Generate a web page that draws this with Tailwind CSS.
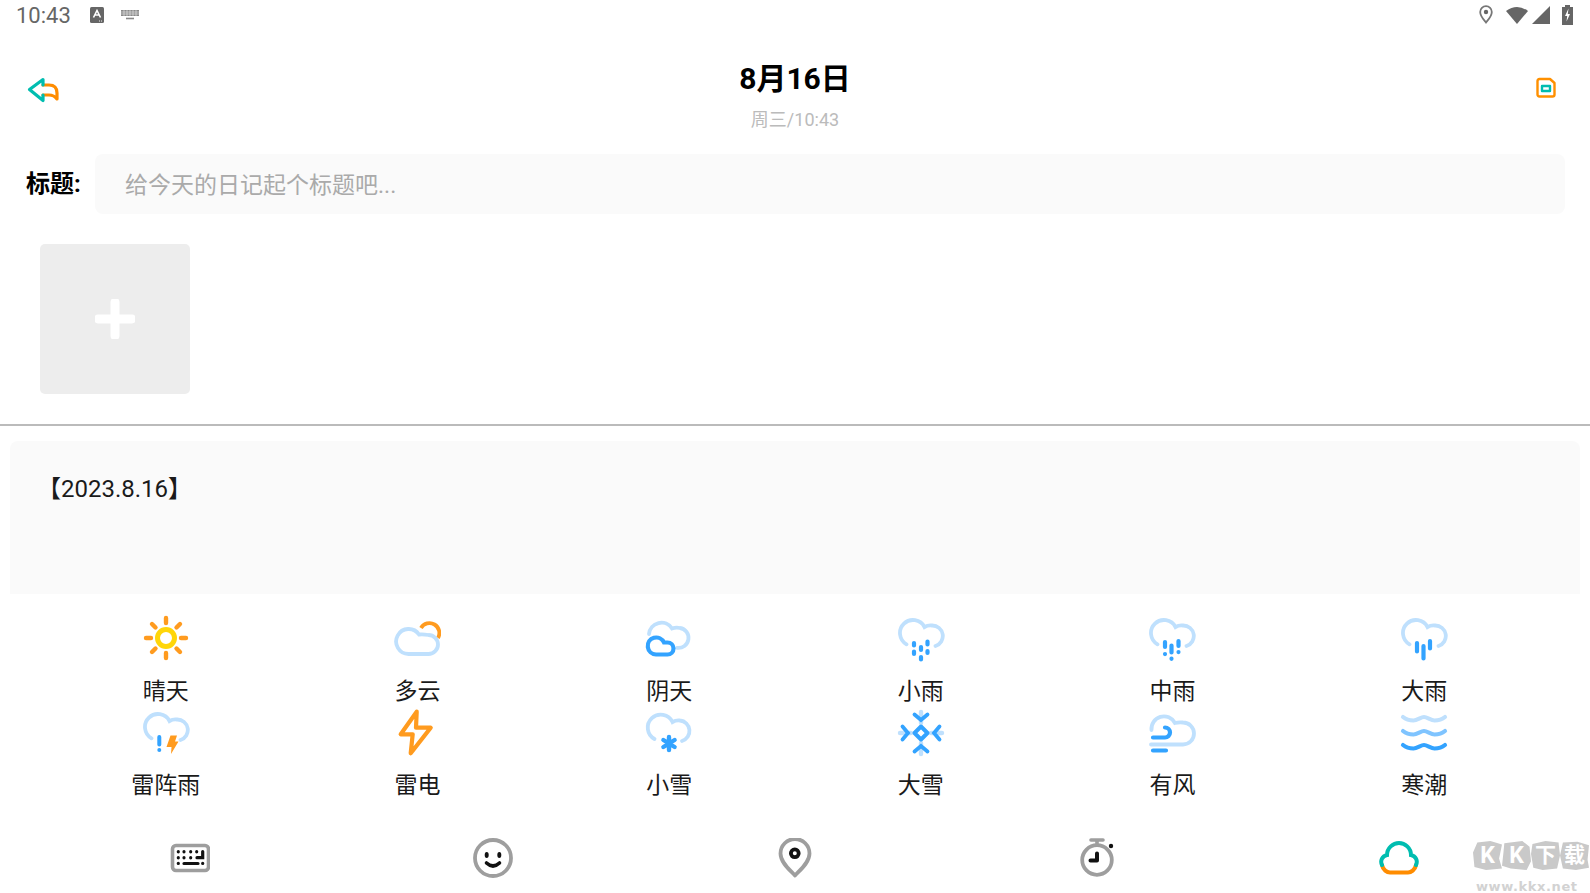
<!DOCTYPE html>
<html lang="zh-CN">
<head>
    <meta charset="UTF-8">
    <meta name="viewport" content="width=device-width, initial-scale=1.0">
    <title>写日记</title>
    <script src="https://cdn.jsdelivr.net/npm/@tailwindcss/browser@4"></script>
</head>
<body class="relative w-[1590px] h-[893px] overflow-hidden bg-white text-black font-['Roboto','Noto_Sans_CJK_SC',sans-serif]">

    <!-- shared cloud outline -->
    <svg class="absolute w-0 h-0" aria-hidden="true">
        <defs>
            <path id="cloud" d="M9.5 30.3A13 13 0 1 1 27.5 13Q31 11 35 11.5A10.5 10.5 0 0 1 38.5 32" fill="none" stroke="#bfe0fd" stroke-width="3.8" stroke-linecap="round"/>
        </defs>
    </svg>

    <!-- status bar -->
    <div class="h-[29px] flex items-center justify-between pl-[16px] pr-[17px]">
        <div class="flex items-center">
            <span class="text-[22px] leading-[29px] text-[#666] w-[54px] pt-[1px]">10:43</span>
            <svg class="ml-[20px]" width="14" height="16" viewBox="0 0 14 16">
                <rect width="14" height="16" rx="1.5" fill="#666"/>
                <path d="M3.5 10.5 7 3.5l3.5 7M5 8h4" fill="none" stroke="#fff" stroke-width="1.6"/>
                <path d="M9 14h.9M11 14h.9" stroke="#fff" stroke-width="1"/>
            </svg>
            <svg class="ml-[17px] mt-[1px]" width="18" height="10" viewBox="0 0 18 10">
                <path d="M0 0h18v6H0z" fill="#888"/>
                <path d="M0 2h18M0 4h18M3 0v6M6 0v6M9 0v6M12 0v6M15 0v6" stroke="#fff" stroke-width=".5"/>
                <path d="M5 8.5h8" stroke="#888" stroke-width="1.6"/>
            </svg>
        </div>
        <div class="flex items-center">
            <svg width="14" height="19" viewBox="0 0 14 19">
                <path d="M7 17.5C5.5 15.5 1.2 11.5 1.2 7A5.8 5.8 0 0 1 12.8 7C12.8 11.5 8.5 15.5 7 17.5Z" fill="none" stroke="#777" stroke-width="1.8"/>
                <circle cx="7" cy="7" r="2.2" fill="#666"/>
            </svg>
            <svg class="ml-[13px]" width="22" height="18" viewBox="0 0 22 18">
                <path d="M0 5Q11-3 22 5L11 18Z" fill="#666"/>
            </svg>
            <svg class="ml-[4px]" width="18" height="18" viewBox="0 0 18 18">
                <path d="M18 0V18H0Z" fill="#666"/>
            </svg>
            <svg class="ml-[12px]" width="11" height="20" viewBox="0 0 11 20">
                <path d="M3 0h5v2h3v18H0V2h3Z" fill="#666"/>
                <path d="M6.5 3.5 3 11h2.2L4.5 16.5 8 9H5.8Z" fill="#fff"/>
            </svg>
        </div>
    </div>

    <!-- header -->
    <div class="grid grid-cols-[1fr_auto_1fr] px-[26px]">
        <div class="pt-[47px]">
            <svg width="34" height="28" viewBox="0 0 34 28" fill="none" stroke-width="3.2" stroke-linejoin="round" stroke-linecap="round">
                <path d="M17 9H23Q31 9 31 17V23Q28 19 23 19H17" stroke="#ff8c00"/>
                <path d="M17 9V3.5L3.5 13.5L17 24.5V19" stroke="#00bdb0"/>
            </svg>
        </div>
        <div class="text-center">
            <h1 class="mt-[30px] h-[40px] text-[30px] leading-[40px] font-bold">8月16日</h1>
            <p class="mt-[9px] h-[24px] text-[18px] leading-[24px] text-[#bbbbbb]">周三/10:43</p>
        </div>
        <div class="pt-[48px] pr-[8px] flex justify-end">
            <svg width="20" height="21" viewBox="0 0 20 21" fill="none" stroke-width="2.4" stroke-linejoin="round">
                <path d="M3.5 2H14L18.5 6V17.5Q18.5 19.5 16.5 19.5H3.5Q1.5 19.5 1.5 17.5V4Q1.5 2 3.5 2Z" stroke="#ff9000"/>
                <rect x="6" y="9" width="8" height="5" stroke="#00bdb0"/>
            </svg>
        </div>
    </div>

    <!-- title row -->
    <div class="mt-[22px] flex items-center pl-[26px] pr-[25px]">
        <span class="w-[69px] shrink-0 h-[60px] pt-[3px] text-[24px] font-bold leading-[54px]">标题:</span>
        <div class="flex-1 h-[60px] rounded-lg bg-[#fafafa] pl-[30px] pt-[3px] text-[23px] leading-[58px] text-[#aaaaaa]">给今天的日记起个标题吧...</div>
    </div>

    <!-- add picture -->
    <div class="mt-[30px] ml-[40px] w-[150px] h-[150px] rounded-[5px] bg-[#ededed] flex items-center justify-center">
        <svg width="40" height="40" viewBox="0 0 40 40">
            <path d="M20 3V37M3 20H37" stroke="#fff" stroke-width="9" stroke-linecap="round"/>
        </svg>
    </div>

    <div class="mt-[30px] h-[2px] bg-[#bbbbbb]"></div>

    <!-- diary text -->
    <div class="mt-[15px] mx-[10px] h-[153px] rounded-t-lg bg-[#fafafa] pl-[27px] pt-[33px] text-[24px] leading-[30px] text-[#1a1a1a]">【2023.8.16】</div>

    <!-- weather -->
    <div class="mt-[20px] mx-[40px] grid grid-cols-6 gap-y-[2px] text-[23px] leading-[30px] text-[#1a1a1a] text-center">
        <div class="flex flex-col items-center">
            <svg width="48" height="48" viewBox="0 0 48 48" fill="none">
                <g stroke="#ff9b1f" stroke-width="4.4" stroke-linecap="round">
                    <path d="M24 4V9M24 39V44M4 24H9M39 24H44M10 10 13.5 13.5M38 10 34.5 13.5M10 38 13.5 34.5M38 38 34.5 34.5"/>
                </g>
                <circle cx="24" cy="24" r="8.5" stroke="#ffd60a" stroke-width="5"/>
            </svg>
            <span class="mt-[15px]">晴天</span>
        </div>
        <div class="flex flex-col items-center">
            <svg width="48" height="48" viewBox="0 0 48 48" fill="none" stroke-width="3.8">
                <path d="M28 14A9.5 9.5 0 0 1 45 24" stroke="#ff9b1f"/>
                <path d="M15.5 40H35.5A9.5 9.5 0 0 0 35.5 21Q30 20 26 20.5A12.5 12.5 0 1 0 15.5 40Z" stroke="#bfe0fd"/>
            </svg>
            <span class="mt-[15px]">多云</span>
        </div>
        <div class="flex flex-col items-center">
            <svg width="48" height="48" viewBox="0 0 48 48" fill="none">
                <path d="M4 20A12.5 12.5 0 0 1 27 14.5Q31 13 35 14A10 10 0 0 1 32 33.8" stroke="#bfe0fd" stroke-width="3.8" stroke-linecap="round"/>
                <path d="M11 40.5H22.5A6 6 0 0 0 22.5 28.5H19A8.5 8.5 0 1 0 11 40.5Z" stroke="#33a3ff" stroke-width="4.2"/>
            </svg>
            <span class="mt-[15px]">阴天</span>
        </div>
        <div class="flex flex-col items-center">
            <svg width="48" height="48" viewBox="0 0 48 48" fill="none">
                <use href="#cloud"/>
                <path d="M17 29V31.5M17 37.5V40M24 33V36M24 43V45.5M30.5 27.5V30.5M30.5 37V39" stroke="#33a3ff" stroke-width="4.2" stroke-linecap="round"/>
            </svg>
            <span class="mt-[15px]">小雨</span>
        </div>
        <div class="flex flex-col items-center">
            <svg width="48" height="48" viewBox="0 0 48 48" fill="none">
                <use href="#cloud"/>
                <path d="M17 28V33M17 40V40.1M23.5 31.5V38.5M23.5 44.7V44.8M30.5 27V32M30.5 38V38.1" stroke="#33a3ff" stroke-width="4.2" stroke-linecap="round"/>
            </svg>
            <span class="mt-[15px]">中雨</span>
        </div>
        <div class="flex flex-col items-center">
            <svg width="48" height="48" viewBox="0 0 48 48" fill="none">
                <use href="#cloud"/>
                <path d="M17 29V37.5M23.5 32V44.5M30 27V34.5" stroke="#33a3ff" stroke-width="4.2" stroke-linecap="round"/>
            </svg>
            <span class="mt-[15px]">大雨</span>
        </div>

        <div class="flex flex-col items-center">
            <svg width="48" height="48" viewBox="0 0 48 48" fill="none">
                <use href="#cloud" y="-1"/>
                <path d="M17.3 28V35.5M17.3 41V41.1" stroke="#33a3ff" stroke-width="4" stroke-linecap="round"/>
                <path d="M28.5 26.5H35L33 32.5H36.5L29 45 29.5 38H24.5Z" fill="#ff9b1f"/>
            </svg>
            <span class="mt-[14px]">雷阵雨</span>
        </div>
        <div class="flex flex-col items-center">
            <svg width="48" height="48" viewBox="0 0 48 48" fill="none">
                <path d="M23.7 2.7 7.7 25.3H19.7L17.7 44.3 37.7 18.7H23Z" stroke="#ff9b1f" stroke-width="4.2" stroke-linejoin="round"/>
            </svg>
            <span class="mt-[14px]">雷电</span>
        </div>
        <div class="flex flex-col items-center">
            <svg width="48" height="48" viewBox="0 0 48 48" fill="none">
                <path d="M9.5 30A13 13 0 1 1 27.5 13Q31 11 35 11.5A10.5 10.5 0 0 1 37 32" stroke="#bfe0fd" stroke-width="3.8" stroke-linecap="round"/>
                <path d="M24 28V41M18.4 31 29.6 38M29.6 31 18.4 38" stroke="#33a3ff" stroke-width="4.4" stroke-linecap="round"/>
            </svg>
            <span class="mt-[14px]">小雪</span>
        </div>
        <div class="flex flex-col items-center">
            <svg width="48" height="48" viewBox="0 0 48 48" fill="none" stroke-linecap="round">
                <path d="M24 3V14M24 34V45M3 24H14M34 24H45" stroke="#bfe0fd" stroke-width="4.4"/>
                <path d="M17.5 5.5 24 11 30.5 5.5M17.5 42.5 24 37 30.5 42.5M5.5 17.5 11 24 5.5 30.5M42.5 17.5 37 24 42.5 30.5" stroke="#33a3ff" stroke-width="3.8"/>
                <path d="M24 17.5 30.5 24 24 30.5 17.5 24Z" stroke="#33a3ff" stroke-width="4" stroke-linejoin="round"/>
            </svg>
            <span class="mt-[14px]">大雪</span>
        </div>
        <div class="flex flex-col items-center">
            <svg width="48" height="48" viewBox="0 0 48 48" fill="none" stroke-linecap="round">
                <path d="M3.5 21A12.5 12.5 0 0 1 27 14Q31 13 35 13.5A11 11 0 0 1 35 35.5H3" stroke="#bfe0fd" stroke-width="3.8"/>
                <path d="M5 28.5H17A5 5 0 0 0 17 18.5M5 41.5H18" stroke="#33a3ff" stroke-width="4.2"/>
            </svg>
            <span class="mt-[14px]">有风</span>
        </div>
        <div class="flex flex-col items-center">
            <svg width="48" height="48" viewBox="0 0 48 48" fill="none" stroke-width="4.2" stroke-linecap="round">
                <path d="M3 8C6 10.5 10 11.5 13.5 11.5S21 8 24 8S31 11.5 34.5 11.5S42 10.5 45 8" stroke="#bfe0fd"/>
                <path d="M3 22C6 24.5 10 25.5 13.5 25.5S21 22 24 22S31 25.5 34.5 25.5S42 24.5 45 22" stroke="#7fc4ff"/>
                <path d="M3 36C6 38.5 10 39.5 13.5 39.5S21 36 24 36S31 39.5 34.5 39.5S42 38.5 45 36" stroke="#33a3ff"/>
            </svg>
            <span class="mt-[14px]">寒潮</span>
        </div>
    </div>

    <!-- bottom toolbar -->
    <div class="mt-[37px] mx-[39px] grid grid-cols-5 justify-items-center">
        <svg width="40" height="40" viewBox="0 0 40 40" fill="none" stroke-linecap="round">
            <rect x="2.5" y="7.5" width="36" height="25" rx="3.5" stroke="#9e9e9e" stroke-width="3.6"/>
            <path d="M8.3 13.7V13.8M14 13.7V13.8M20.7 13.7V13.8M26.7 13.7V13.8M8.3 19.7V19.8M14 19.7V19.8M20.7 19.7V19.8M8.3 25.3V25.4M32.7 25.3V25.4" stroke="#111" stroke-width="3.2"/>
            <path d="M14 25.5H28M32.7 13.5V19.7H27" stroke="#111" stroke-width="3.2"/>
        </svg>
        <svg width="40" height="40" viewBox="0 0 40 40" fill="none">
            <circle cx="20" cy="20" r="18" stroke="#9e9e9e" stroke-width="3.8"/>
            <ellipse cx="13.7" cy="17" rx="2" ry="3" fill="#111"/>
            <ellipse cx="26.3" cy="17" rx="2" ry="3" fill="#111"/>
            <path d="M13.5 25Q20 31 26.5 25" stroke="#111" stroke-width="3.6" stroke-linecap="round"/>
        </svg>
        <svg width="40" height="40" viewBox="0 0 40 40" fill="none">
            <path d="M20 37.5C16 33 5.5 25 5.5 15.5A14.5 14.5 0 0 1 34.5 15.5C34.5 25 24 33 20 37.5Z" stroke="#9e9e9e" stroke-width="3.8" stroke-linejoin="round"/>
            <circle cx="19.8" cy="15.3" r="3.9" stroke="#111" stroke-width="3.8"/>
        </svg>
        <svg width="40" height="40" viewBox="0 0 40 40" fill="none">
            <circle cx="20" cy="22" r="14.8" stroke="#9e9e9e" stroke-width="3.8"/>
            <path d="M14 2H26M20 2V7" stroke="#9e9e9e" stroke-width="3.6" stroke-linecap="round"/>
            <circle cx="34" cy="8" r="2.2" fill="#111"/>
            <path d="M20 15.5V22.5H13.5" stroke="#111" stroke-width="4" stroke-linejoin="round" stroke-linecap="round"/>
        </svg>
        <svg class="-translate-x-[1px]" width="40" height="40" viewBox="0 0 40 40" fill="none" stroke-width="4" stroke-linecap="round">
            <path d="M3 27C4 32 8 34.5 11 34.5H29C32 34.5 36 32 37 27" stroke="#ff8c00"/>
            <path d="M3 27C1 23 3 18 8 17C8 10 14 5 20 5C26 5 32 10 32 17C37 18 39 23 37 27" stroke="#00bdb0"/>
        </svg>
    </div>

    <!-- watermark, sits over the page corner -->
    <div class="absolute left-[1473px] top-[841px] w-[117px]">
        <div class="flex text-white font-bold text-[23px] leading-[29px] text-center">
            <span class="w-[29px] h-[29px] bg-[#c9c9c9] [clip-path:polygon(15%_5%,60%_0,100%_12%,90%_60%,100%_95%,45%_100%,5%_90%,0_40%)]">K</span>
            <span class="w-[29px] h-[29px] bg-[#c9c9c9] [clip-path:polygon(8%_8%,70%_0,95%_20%,100%_70%,85%_100%,30%_95%,0_85%,5%_40%)]">K</span>
            <span class="w-[29px] h-[29px] bg-[#c9c9c9] text-[21px] [clip-path:polygon(5%_10%,50%_0,95%_5%,100%_50%,90%_95%,40%_100%,8%_92%,0_45%)]">下</span>
            <span class="w-[29px] h-[29px] bg-[#c9c9c9] text-[21px] [clip-path:polygon(10%_5%,60%_3%,100%_15%,95%_65%,100%_92%,55%_100%,10%_95%,0_50%)]">载</span>
        </div>
        <div class="mt-[9px] pl-[3px] text-[13px] leading-[16px] font-bold tracking-[0.6px] text-[#d2d2d2] font-['DejaVu_Sans',sans-serif]">www.kkx.net</div>
    </div>
</body>
</html>
